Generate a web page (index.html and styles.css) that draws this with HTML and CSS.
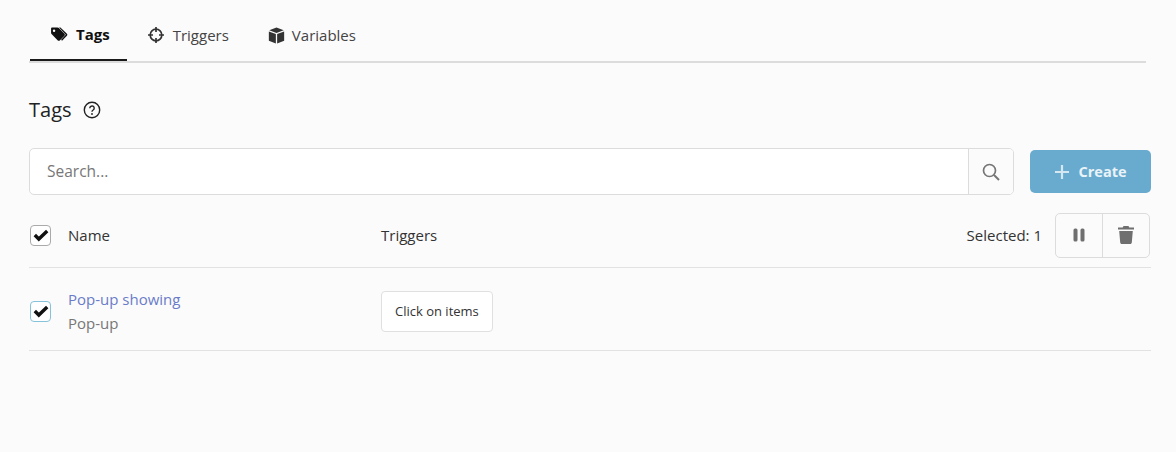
FILE: index.html
```html
<!DOCTYPE html>
<html lang="en">
<head>
<meta charset="utf-8">
<title>Tags</title>
<link rel="stylesheet" href="styles.css">
</head>
<body>
<main class="page">
  <nav class="tabs">
    <a class="tab active">
      <svg class="tab-icon" viewBox="0 0 20 16" width="19" height="15"><path fill="#111" d="M1 1.600C1 .9 1.500.4 2.200.4h5.700c.4 0 .8.2 1.100.5l6.300 6.300c.6.600.6 1.500 0 2.100l-5 5c-.6.600-1.500.6-2.100 0L1.500 7.500A1.600 1.600 0 0 1 1 6.400zM4.200 5.200a1.300 1.300 0 1 0 0-2.600 1.300 1.300 0 0 0 0 2.600z"/><path fill="#111" d="M11 .4l6.900 6.800c.6.600.6 1.500 0 2.100l-5.200 5.300-1-1 5-5.300L9.500.4z"/></svg>
      <span>Tags</span>
    </a>
    <a class="tab triggers">
      <svg class="tab-icon" viewBox="0 0 16 16" width="16" height="16"><circle cx="8" cy="8" r="5.800" fill="none" stroke="#333" stroke-width="1.700"/><path stroke="#333" stroke-width="1.700" d="M8 0v5M8 11v5M0 8h5M11 8h5"/></svg>
      <span>Triggers</span>
    </a>
    <a class="tab variables">
      <svg class="tab-icon" viewBox="0 0 16 16" width="17" height="17"><path fill="#333" d="M8 .5l6.800 2.500L8 5.600 1.200 3zM.8 4.200l6.600 2.500v8.800L.8 12.900zM15.200 4.200v8.700l-6.600 2.600V6.700z"/></svg>
      <span>Variables</span>
    </a>
  </nav>

  <h1 class="title">
    <span>Tags</span>
    <svg viewBox="0 0 18 18" width="18" height="18"><circle cx="9" cy="9" r="7.700" fill="none" stroke="#222" stroke-width="1.400"/><path d="M6.800 7.200a2.200 2.200 0 1 1 3.400 1.800c-.8.500-1.200.9-1.200 1.700" fill="none" stroke="#222" stroke-width="1.400"/><circle cx="9" cy="13" r=".9" fill="#222"/></svg>
  </h1>

  <div class="toolbar">
    <div class="search">
      <input class="search-input" type="text" placeholder="Search...">
      <button class="search-btn" type="button" aria-label="Search">
        <svg viewBox="0 0 18 18" width="18" height="18"><circle cx="7.500" cy="7.500" r="6" fill="none" stroke="#757575" stroke-width="1.700"/><path d="M12 12l5 5" stroke="#757575" stroke-width="1.900"/></svg>
      </button>
    </div>
    <button class="create" type="button">
      <svg viewBox="0 0 16 16" width="16" height="16"><path d="M8 1v14M1 8h14" stroke="#d5e8f2" stroke-width="2.200"/></svg>
      <span>Create</span>
    </button>
  </div>

  <div class="row head">
    <span class="check">
      <svg viewBox="0 0 16 14" width="16" height="14"><path d="M1.800 7l4 4 8.400-8" fill="none" stroke="#111" stroke-width="3.400"/></svg>
    </span>
    <span class="col-name">Name</span>
    <span class="col-triggers">Triggers</span>
    <div class="selected">
      <span>Selected: 1</span>
      <div class="actions">
        <button type="button" aria-label="Pause"><svg viewBox="0 0 12 14" width="12" height="14"><rect x="0.500" y="0.500" width="4" height="13" rx="1.500" fill="#6f6f6f"/><rect x="7.500" y="0.500" width="4" height="13" rx="1.500" fill="#6f6f6f"/></svg></button>
        <button type="button" aria-label="Delete"><svg viewBox="0 0 16 18" width="16" height="18"><path fill="#6f6f6f" d="M5.500 0h5l.8 1.500H16v2H0v-2h4.700zM1.200 5h13.600l-1 11.500c-.1.900-.7 1.500-1.600 1.500H3.800c-.9 0-1.500-.6-1.600-1.500z"/></svg></button>
      </div>
    </div>
  </div>

  <div class="row item">
    <span class="check focused">
      <svg viewBox="0 0 16 14" width="16" height="14"><path d="M1.800 7l4 4 8.400-8" fill="none" stroke="#111" stroke-width="3.400"/></svg>
    </span>
    <div class="col-name">
      <a class="item-link">Pop-up showing</a>
      <div class="item-type">Pop-up</div>
    </div>
    <div class="col-triggers"><span class="chip">Click on items</span></div>
  </div>
</main>
</body>
</html>
```
FILE: styles.css
```css
* { box-sizing: border-box; }
html, body { margin: 0; height: 100%; }
body {
  background: #fbfbfb;
  color: #333;
  font-family: "Open Sans", "Liberation Sans", sans-serif;
  font-size: 15px;
}
.page { width: 1122px; margin-left: 29px; }
.tabs {
  display: flex;
  padding-left: 1px;
  padding-top: 18px;
  height: 63px;
  border-bottom: 2px solid #dcdcdc;
  width: 1117px;
}
.tab {
  display: flex;
  align-items: center;
  gap: 7px;
  height: 43px;
  padding: 0 18px 9px 20px;
  color: #444;
}
.tab.active {
  padding-right: 17px;
  font-weight: 700;
  color: #111;
  border-bottom: 2px solid #1a1a1a;
}
.tab.triggers { gap: 9px; padding-left: 21px; padding-right: 19px; }
.title {
  display: flex;
  align-items: center;
  gap: 11px;
  margin: 33px 0 0;
  height: 27px;
  font-size: 20px;
  font-weight: 400;
  color: #222;
}
.toolbar {
  display: flex;
  align-items: center;
  gap: 16px;
  margin-top: 25px;
}
.search {
  display: flex;
  flex: 1;
  height: 47px;
  background: #fff;
  border: 1px solid #dcdcdc;
  border-radius: 5px;
  overflow: hidden;
}
.search-input {
  flex: 1;
  border: 0;
  outline: 0;
  padding: 0 17px 2px;
  background: transparent;
  font: inherit;
  font-size: 15.500px;
}
.search-input::placeholder { color: #777; opacity: 1; }
.search-btn {
  width: 45px;
  display: flex;
  align-items: center;
  justify-content: center;
  padding: 0;
  border: 0;
  border-left: 1px solid #dcdcdc;
  background: #fbfbfb;
}
.create {
  display: flex;
  align-items: center;
  justify-content: center;
  gap: 8px;
  width: 121px;
  height: 43px;
  border: 0;
  border-radius: 5px;
  background: #68abcf;
  color: #eaf3f8;
  font: inherit;
  font-size: 14.500px;
  font-weight: 700;
}
.row {
  display: flex;
  align-items: center;
  border-bottom: 1px solid #e2e2e2;
}
.head { height: 73px; padding-top: 8px; }
.item { height: 83px; padding-top: 4px; }
.check {
  display: flex;
  align-items: center;
  justify-content: center;
  width: 21px;
  height: 21px;
  margin-left: 1px;
  background: #fff;
  border: 1px solid #aaa;
  border-radius: 4px;
}
.check.focused { border-color: #86c3da; }
.col-name { width: 313px; margin-left: 17px; }
.col-triggers { flex: none; }
.selected {
  display: flex;
  align-items: center;
  gap: 13px;
  margin-left: auto;
  margin-right: 1px;
}
.actions {
  display: flex;
  height: 45px;
  border: 1px solid #dcdcdc;
  border-radius: 5px;
}
.actions button {
  display: flex;
  align-items: center;
  justify-content: center;
  width: 46px;
  padding: 0;
  border: 0;
  background: transparent;
}
.actions button + button { width: 47px; border-left: 1px solid #dcdcdc; }
.item-link { color: #6a7cc9; }
.item-type { margin-top: 4px; color: #777; }
.chip {
  display: inline-flex;
  align-items: center;
  height: 41px;
  padding: 0 13px;
  background: #fff;
  border: 1px solid #e0e0e0;
  border-radius: 4px;
  font-size: 13px;
}
```
